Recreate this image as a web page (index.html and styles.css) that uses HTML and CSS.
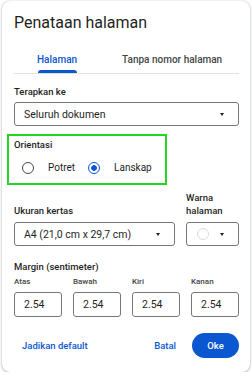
FILE: index.html
```html
<!DOCTYPE html>
<html lang="id">
<head>
    <meta charset="UTF-8">
    <meta name="viewport" content="width=device-width, initial-scale=1.0">
    <title>Penataan halaman</title>
    <link rel="stylesheet" href="styles.css">
</head>
<body>
    <div class="dialog">
        <h2 class="title">Penataan halaman</h2>

        <div class="tabs">
            <div class="tab active"><span>Halaman</span></div>
            <div class="tab"><span>Tanpa nomor halaman</span></div>
        </div>

        <div class="label apply-label">Terapkan ke</div>
        <div class="select">
            <span>Seluruh dokumen</span>
            <i class="arrow"></i>
        </div>

        <!-- Orientasi (disorot) -->
        <div class="orientation">
            <div class="label">Orientasi</div>
            <div class="radios">
                <div class="radio"></div>
                <span class="radio-text">Potret</span>
                <div class="radio checked"></div>
                <span class="radio-text">Lanskap</span>
            </div>
        </div>

        <div class="paper-row">
            <div class="paper-col">
                <div class="label">Ukuran kertas</div>
                <div class="select">
                    <span>A4 (21,0 cm x 29,7 cm)</span>
                    <i class="arrow"></i>
                </div>
            </div>
            <div class="color-col">
                <div class="label">Warna<br>halaman</div>
                <div class="select color-select">
                    <span class="swatch"></span>
                    <i class="arrow"></i>
                </div>
            </div>
        </div>

        <div class="label margin-label">Margin (sentimeter)</div>
        <div class="margins">
            <div class="margin-field">
                <div class="sublabel">Atas</div>
                <div class="input">2.54</div>
            </div>
            <div class="margin-field">
                <div class="sublabel">Bawah</div>
                <div class="input">2.54</div>
            </div>
            <div class="margin-field">
                <div class="sublabel">Kiri</div>
                <div class="input">2.54</div>
            </div>
            <div class="margin-field">
                <div class="sublabel">Kanan</div>
                <div class="input">2.54</div>
            </div>
        </div>

        <div class="footer">
            <button class="text-button">Jadikan default</button>
            <div class="actions">
                <button class="text-button">Batal</button>
                <button class="ok-button">Oke</button>
            </div>
        </div>
    </div>
</body>
</html>
```

FILE: styles.css
```css
body {
    margin: 0;
    padding: 0;
    background: #fff;
    font-family: Roboto, "Noto Sans", Arial, sans-serif;
    color: #1f1f1f;
}

.dialog {
    box-sizing: border-box;
    width: 248px;
    margin: 1px 2px 0 2px;
    padding: 12px 11px 14px 12px;
    background: #fff;
    border-radius: 8px;
    box-shadow: 0 1px 3px rgba(60, 64, 67, 0.35), 0 0 1px rgba(60, 64, 67, 0.3);
}

.title {
    margin: 0;
    font-size: 16px;
    font-weight: 400;
    line-height: 20px;
}

/* Tabs */
.tabs {
    display: flex;
    margin-top: 20px;
    border-bottom: 1px solid #e1e3e1;
}

.tab {
    flex-shrink: 0;
    white-space: nowrap;
    padding: 0 23px 6px 23px;
    font-size: 10px;
    font-weight: 500;
    line-height: 14px;
    color: #444746;
}

.tab + .tab {
    padding: 0 0 6px 22px;
}

.tab span {
    position: relative;
    display: inline-block;
}

.tab.active {
    color: #0b57d0;
}

.tab.active span::after {
    content: "";
    position: absolute;
    left: 1px;
    right: 0;
    bottom: -6px;
    height: 3px;
    background: #0b57d0;
    border-radius: 3px 3px 0 0;
}

/* Labels */
.label {
    font-size: 9.5px;
    font-weight: 500;
    line-height: 12.5px;
    margin-bottom: 4px;
}

.apply-label {
    margin-top: 11.5px;
}

/* Select boxes */
.select {
    box-sizing: border-box;
    display: flex;
    align-items: center;
    justify-content: space-between;
    height: 24px;
    padding: 0 14px 0 9px;
    border: 1px solid #747775;
    border-radius: 3px;
    font-size: 10.5px;
}

.arrow {
    width: 0;
    height: 0;
    border-left: 2.5px solid transparent;
    border-right: 2.5px solid transparent;
    border-top: 3px solid #1f1f1f;
}

/* Orientasi */
.orientation {
    width: 160px;
    box-sizing: border-box;
    margin: 8px 0 0 -7px;
    padding: 3px 0 5.5px 5px;
    border: 2px solid #22d622;
}

.radios {
    display: flex;
    align-items: center;
    height: 20px;
    margin-top: 6px;
    padding-left: 8px;
    font-size: 10px;
    color: #1f1f1f;
}

.radio {
    box-sizing: border-box;
    width: 12px;
    height: 12px;
    border: 1.5px solid #444746;
    border-radius: 50%;
}

.radio.checked {
    border-color: #0b57d0;
    background: radial-gradient(circle, #0b57d0 0 2.7px, transparent 3px);
}

.radio-text {
    margin: 0 13px 0 14px;
}

/* Ukuran kertas + warna */
.paper-row {
    display: flex;
    align-items: flex-end;
    gap: 11px;
    margin-top: 7px;
}

.paper-row .label {
    margin-bottom: 5px;
}

.paper-col {
    width: 161px;
}

.color-col {
    width: 53px;
}

.color-select {
    padding: 0 14px 0 10px;
}

.swatch {
    box-sizing: border-box;
    width: 12px;
    height: 12px;
    border: 1px solid #dadce0;
    border-radius: 50%;
}

/* Margin */
.margin-label {
    margin-top: 14.5px;
    margin-bottom: 4px;
}

.margins {
    display: flex;
    gap: 11px;
}

.margin-field {
    width: 48px;
}

.sublabel {
    font-size: 8px;
    font-weight: 500;
    line-height: 10px;
    color: #444746;
    margin-bottom: 4.7px;
}

.input {
    box-sizing: border-box;
    display: flex;
    align-items: center;
    height: 25px;
    padding-left: 9px;
    border: 1px solid #747775;
    border-radius: 3px;
    font-size: 10.5px;
}

/* Footer */
.footer {
    display: flex;
    justify-content: space-between;
    align-items: center;
    margin-top: 16px;
}

.actions {
    display: flex;
    align-items: center;
    gap: 8px;
}

button {
    font-family: Roboto, "Noto Sans", Arial, sans-serif;
    font-size: 9.5px;
    font-weight: 500;
    height: 25px;
    border: none;
    cursor: pointer;
}

.text-button {
    padding: 0 8px;
    background: none;
    color: #0b57d0;
}

.ok-button {
    width: 47px;
    padding: 0;
    border-radius: 13px;
    background: #0b57d0;
    color: #fff;
}
```
